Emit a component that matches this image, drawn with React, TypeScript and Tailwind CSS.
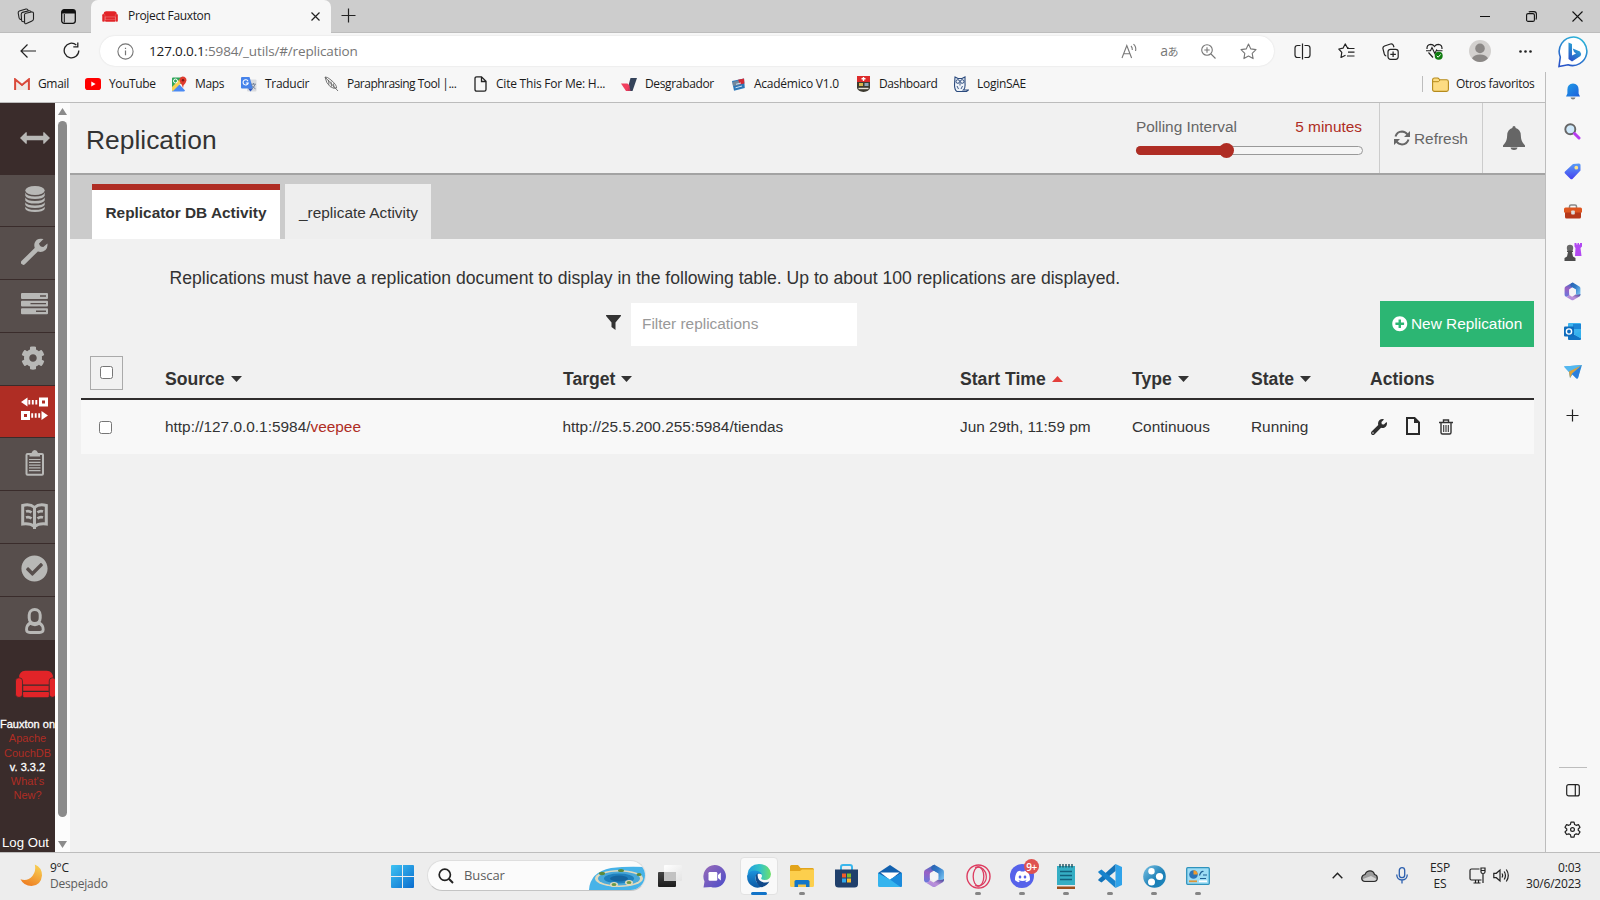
import React from "react";
import type { ReactNode } from "react";
import { SiDiscord } from "react-icons/si";
import { FaWrench, FaPlusCircle, FaCheckCircle, FaCog } from "react-icons/fa";

type IconProps = { w: number; h: number; vb?: string; children: ReactNode; className?: string };

function Svg({ w, h, vb, children, className }: IconProps) {
  return (
    <svg width={w} height={h} viewBox={vb ?? `0 0 ${w} ${h}`} fill="none" className={"block shrink-0 " + (className ?? "")}>
      {children}
    </svg>
  );
}

/* ---------- Shared drawings ---------- */

function Couch({ w, h, color = "#e22428", gap = "#3b2c2b" }: { w: number; h: number; color?: string; gap?: string }) {
  return (
    <Svg w={w} h={h} vb="0 0 40 27">
      <path d="M4 7 Q4 1 10 0.5 H31 Q37 1 37 7 V14 H4z" fill={color} />
      <path d="M4 7 Q8 8 8 14 V24 H33 V14 Q33 8 37 7" fill={color} />
      <path d="M7.5 14.6 H33 M7.5 20.8 H33" stroke={gap} strokeWidth="1.2" />
      <rect x="0.5" y="7.5" width="6.8" height="19" rx="3" fill={color} stroke={gap} strokeWidth=".8" />
      <rect x="33.4" y="7.5" width="6.4" height="19" rx="3" fill={color} stroke={gap} strokeWidth=".8" />
      <rect x="8" y="21.5" width="25" height="5" rx="1" fill={color} />
    </Svg>
  );
}

function M365({ s, id }: { s: number; id: string }) {
  return (
    <Svg w={s} h={s} vb="0 0 24 24">
      <defs>
        <linearGradient id={id + "a"} x1="0.500" y1="0" x2="0.300" y2="1">
          <stop offset="0" stopColor="#3f6fc4" />
          <stop offset=".45" stopColor="#9a5fc4" />
          <stop offset="1" stopColor="#6a78dc" />
        </linearGradient>
        <linearGradient id={id + "b"} x1="0" y1="0" x2="1" y2="0.800">
          <stop offset="0" stopColor="#2a5fae" />
          <stop offset=".45" stopColor="#2f78c6" />
          <stop offset="1" stopColor="#7ac4f2" />
        </linearGradient>
        <linearGradient id={id + "c"} x1="0" y1="1" x2="1" y2="0">
          <stop offset="0" stopColor="#a386e0" />
          <stop offset=".5" stopColor="#bb8fd8" />
          <stop offset="1" stopColor="#3c3f94" />
        </linearGradient>
      </defs>
      <path d="M13 .8 Q12 .6 11 1.200 L3.300 5.800 Q2 6.600 2 8.200 V16 Q2 17.600 3.300 18.300 Q5 19 6.500 18 Q8 17 8 15 V9 L13 6z" fill={`url(#${id}a)`} />
      <path d="M11 1.200 Q12.200.500 13.400 1.200 L20.700 5.600 Q22 6.500 22 8 V15.800 Q22 17.500 20.500 18.300 L16.300 15.500 V9.500 L9.500 5.500 Q8.500 3 11 1.200z" fill={`url(#${id}b)`} />
      <path d="M22 15 Q22.200 17.400 20.700 18.300 L13.400 22.700 Q12 23.500 10.600 22.700 L3.300 18.300 Q6 19.500 8 16.500 L11.500 18.600 L16 15.800 Q20 16.500 22 15z" fill={`url(#${id}c)`} />
      <path d="M12 7.200 L16.300 9.700 V14.500 L12 17 L7.800 14.500 V9.700z" fill="#f4f4f6" />
    </Svg>
  );
}

/* ---------- Title bar ---------- */

function TitleBar() {
  return (
    <div className="flex h-[33px] shrink-0 items-stretch border-b border-[#bdbdbd] bg-[#cdcdcd]">
      <div className="flex w-[91px] items-center gap-[26px] pl-[17px]">
        <Svg w={18} h={17}>
          <g stroke="#222" strokeWidth="1.100" strokeLinejoin="round">
            <path d="M7.500 6.800 Q7.600 5.600 8.800 5.300 L14.500 4 Q16.500 3.700 16.500 5.500 V11 Q16.400 12.500 15 13 L9.500 15.600 Q7.700 16.200 7.600 14.500z" />
            <path d="M7.400 13.600 L6.200 13.800 Q4.700 13.800 4.600 12.500 L4.200 6.500 Q4.200 4.800 5.500 4.400 L12 2.800 Q13.700 2.500 14.200 4" />
            <path d="M4.500 11.500 L3.500 11.400 Q2.300 11.300 2.100 10 L1.200 5 Q1.100 3.500 2.300 3 L9 1 Q10.800.7 11.300 2.800" />
          </g>
        </Svg>
        <Svg w={15} h={15}>
          <rect x=".7" y=".7" width="13.600" height="13.600" rx="2.500" stroke="#111" strokeWidth="1.300" />
          <path d="M.7 4.500 V3 Q.7.7 3 .7 H12 Q14.300.7 14.300 3 V4.500z" fill="#111" />
          <path d="M3.300 5 V13.500" stroke="#111" strokeWidth="1" />
        </Svg>
      </div>
      <div className="-mb-px flex w-[240px] items-center rounded-t-[7px] bg-[#f7f7f7] pb-px pl-[11px] pr-[11px]">
        <Couch w={16} h={11} gap="#f19a9a" />
        <span className="ml-[10px] flex-1 text-[12px] tracking-[-0.34px] text-[#1a1a1a]">Project Fauxton</span>
        <Svg w={9} h={9}>
          <path d="M.5.5 L8.500 8.500 M8.500.5 L.5 8.500" stroke="#222" strokeWidth="1.200" />
        </Svg>
      </div>
      <div className="flex flex-1 items-center pl-[10px]">
        <Svg w={15} h={15} className="-mt-px">
          <path d="M7.500.5 V14.500 M.5 7.500 H14.500" stroke="#222" strokeWidth="1.200" />
        </Svg>
      </div>
      <div className="flex items-center pr-[17px]">
        <Svg w={10} h={10}>
          <path d="M0 5.500 H10" stroke="#111" strokeWidth="1" />
        </Svg>
        <Svg w={11} h={11} className="ml-[36px]">
          <rect x=".6" y="2.600" width="7.800" height="7.800" rx="1.500" stroke="#111" strokeWidth="1.100" />
          <path d="M2.800 1 Q3.200.6 4.500.6 H8 Q10.400.6 10.400 3 V6.500 Q10.400 8 9.800 8.500" stroke="#111" strokeWidth="1.100" />
        </Svg>
        <Svg w={11} h={11} className="ml-[35px]">
          <path d="M.5.5 L10.500 10.500 M10.500.5 L.5 10.500" stroke="#111" strokeWidth="1.100" />
        </Svg>
      </div>
    </div>
  );
}

/* ---------- Toolbar ---------- */

function Cell({ w, children }: { w: string; children: ReactNode }) {
  return <div className={"flex shrink-0 items-center justify-center " + w}>{children}</div>;
}

const STAR = "M8.500 1 L10.800 5.900 L16 6.600 L12.200 10.300 L13.100 15.600 L8.500 13.100 L3.900 15.600 L4.800 10.300 L1 6.600 L6.200 5.900z";

function Toolbar() {
  return (
    <div className="flex h-[39px] shrink-0 items-center bg-[#f7f7f7] pb-[3px]">
      <div className="flex w-[100px] items-center pl-[20px]">
        <Svg w={16} h={14} className="-mt-px">
          <path d="M16 7 H1 M7.500.5 L1 7 L7.500 13.500" stroke="#222" strokeWidth="1.200" />
        </Svg>
        <Svg w={17} h={17} className="-mt-px ml-[27px]">
          <path d="M15.800 8.500 A7.300 7.300 0 1 1 13.300 3" stroke="#222" strokeWidth="1.300" />
          <path d="M14.800.4 V4.800 H10.300" stroke="#222" strokeWidth="1.300" />
        </Svg>
      </div>
      <div className="flex h-[30px] w-[1174px] items-center rounded-full bg-white shadow-[0_0_2px_rgba(0,0,0,0.12)]">
        <Svg w={17} h={17} className="ml-[17px]">
          <circle cx="8.500" cy="8.500" r="7.600" stroke="#757575" strokeWidth="1.100" />
          <path d="M8.500 7.500 V12.300 M8.500 4.700 V6" stroke="#757575" strokeWidth="1.200" />
        </Svg>
        <span className="ml-[15px] flex-1 text-[13.500px] tracking-[-0.15px] text-[#767676]">
          <span className="text-[#1a1a1a]">127.0.0.1</span>:5984/_utils/#/replication
        </span>
        <Cell w="w-[40px]">
          <Svg w={17} h={17}>
            <path d="M1 15 L5.800 2.500 L10.600 15 M2.700 10.800 H9" stroke="#777" strokeWidth="1.100" />
            <path d="M10 3 Q11.500 4.500 11.300 7 M12.500 1.200 Q15.500 4 14.600 8" stroke="#777" strokeWidth="1.100" />
          </Svg>
        </Cell>
        <Cell w="w-[40px]">
          <span className="-mt-px font-['Open_Sans','Noto_Sans_CJK_JP',sans-serif] text-[14px] leading-none tracking-[-0.6px] text-[#777]">
            a<span className="text-[11px]">あ</span>
          </span>
        </Cell>
        <Cell w="w-[40px]">
          <Svg w={15} h={15} className="-ml-px">
            <circle cx="6" cy="6" r="5.300" stroke="#777" strokeWidth="1.100" />
            <path d="M10 10 L14.500 14.500 M6 3.300 V8.700 M3.300 6 H8.700" stroke="#777" strokeWidth="1.100" />
          </Svg>
        </Cell>
        <Cell w="w-[40px]">
          <Svg w={17} h={17} className="-ml-px">
            <path d={STAR} stroke="#777" strokeWidth="1.100" strokeLinejoin="round" />
          </Svg>
        </Cell>
        <div className="w-[5px]" />
      </div>
      <div className="w-[6px]" />
      <Cell w="w-[44px]">
        <Svg w={17} h={17}>
          <path d="M6.500 2.500 H3.500 Q1 2.500 1 5 V12 Q1 14.500 3.500 14.500 H6.500 M10.500 2.500 H13.500 Q16 2.500 16 5 V12 Q16 14.500 13.500 14.500 H10.500 M8.500 .5 V16.500" stroke="#222" strokeWidth="1.200" />
        </Svg>
      </Cell>
      <Cell w="w-[44px]">
        <Svg w={17} h={17}>
          <path d="M10.500 4.500 L9.200 4.500 L7.200 .9 L5 5.200 L.8 6 L3.800 9.300 L3 14.500 L7.500 12.300" stroke="#222" strokeWidth="1.200" strokeLinejoin="round" />
          <path d="M9 5.500 H16.500 M10 9.200 H16.500 M9 13 H16.500" stroke="#222" strokeWidth="1.200" />
        </Svg>
      </Cell>
      <Cell w="w-[44px]">
        <Svg w={17} h={17}>
          <rect x="6" y="6.300" width="10.200" height="10" rx="2.500" stroke="#222" strokeWidth="1.200" />
          <path d="M11.100 8.500 V14 M8.300 11.300 H13.900" stroke="#222" strokeWidth="1.200" />
          <path d="M4.300 13 Q3 12.800 2.300 11 L1 5.800 Q.6 3.800 2.500 3 L8.500 1 Q10.500.4 11.300 2.200 L12 4.300" stroke="#222" strokeWidth="1.200" />
        </Svg>
      </Cell>
      <Cell w="w-[44px]">
        <Svg w={17} h={17}>
          <path d="M1 6 Q.6 1.400 4.800 1.300 Q7 1.300 8.500 3.500 Q10 1.300 12.200 1.300 Q16.300 1.400 16 6 M2.500 9.500 L7 14.500" stroke="#222" strokeWidth="1.200" />
          <path d="M0 7.800 H4.500 L6 4.500 L8.800 10.500 L10.600 7 L11.300 7.800 H16.500" stroke="#222" strokeWidth="1.100" />
          <circle cx="12.700" cy="12.800" r="4" fill="#107c10" />
          <path d="M10.800 12.900 L12.200 14.200 L14.700 11.400" stroke="#fff" strokeWidth="1" />
        </Svg>
      </Cell>
      <Cell w="w-[47px]">
        <Svg w={22} h={22}>
          <circle cx="11" cy="11" r="11" fill="#d3d1cf" />
          <circle cx="11" cy="8.400" r="4.800" fill="#8b8886" />
          <path d="M3 18.300 Q5 14.500 11 14.500 Q17 14.500 19 18.300 Q16 22 11 22 Q6 22 3 18.300z" fill="#8b8886" />
        </Svg>
      </Cell>
      <Cell w="w-[45px]">
        <Svg w={13} h={3}>
          <circle cx="1.500" cy="1.500" r="1.300" fill="#222" />
          <circle cx="6.500" cy="1.500" r="1.300" fill="#222" />
          <circle cx="11.500" cy="1.500" r="1.300" fill="#222" />
        </Svg>
      </Cell>
      <Cell w="w-[50px]">
        <Svg w={31} h={32} className="mt-px">
          <defs>
            <linearGradient id="bing" x1="0.800" y1="0" x2="0.300" y2="1">
              <stop offset="0" stopColor="#2db7d8" />
              <stop offset="1" stopColor="#2955c8" />
            </linearGradient>
          </defs>
          <path d="M15.800 1 A14.300 14.300 0 1 1 10 28.800 L1 30.500 L2.300 21 A14.500 14.500 0 0 1 15.800 1z" fill="#fff" stroke="url(#bing)" strokeWidth="1.600" />
          <path d="M10.500 6.500 L14 8 V19.500 L18 17.500 L16 16 L14.800 12.600 L22 15.500 Q23.800 17.500 22.500 20 L14 25.500 L10.500 23z" fill="url(#bing)" />
        </Svg>
      </Cell>
    </div>
  );
}

/* ---------- Bookmarks ---------- */

function Bookmark({ w, icon, label, track }: { w: string; icon: ReactNode; label: string; track?: string }) {
  return (
    <div className={"flex shrink-0 items-center " + w}>
      <div className="flex w-4 justify-center">{icon}</div>
      <span className={"ml-2 whitespace-nowrap text-[12px] text-[#1a1a1a] " + (track ?? "tracking-[-0.35px]")}>{label}</span>
    </div>
  );
}

function Bookmarks() {
  return (
    <div className="flex h-[31px] shrink-0 items-center border-b border-[#bcbcbc] bg-[#f7f7f7] pb-[6px] pl-[14px]">
      <Bookmark w="w-[71px]" label="Gmail" icon={
        <Svg w={16} h={12}>
          <path d="M1.200 12 V1.500 L8 7 L14.800 1.500 V12" stroke="#d9493a" strokeWidth="2.200" />
          <path d="M2.500 12 V4 L8 8.500 L13.500 4 V12z" fill="#eee9e6" />
        </Svg>} />
      <Bookmark w="w-[86px]" label="YouTube" track="tracking-[-0.4px]" icon={
        <Svg w={16} h={12}>
          <rect width="16" height="12" rx="2.800" fill="#f00" />
          <path d="M6.300 3.400 L10.600 6 L6.300 8.600z" fill="#fff" />
        </Svg>} />
      <Bookmark w="w-[70px]" label="Maps" icon={
        <Svg w={16} h={16}>
          <path d="M1 2.500 Q1 1.500 2 1.500 H12 V8 L8 8 L1 15z" fill="#2fa65a" />
          <path d="M1 15 L8 8 L14 14.500 Q13.700 15.500 12.700 15.500 H2 Q1 15.500 1 15z" fill="#4a8af4" />
          <path d="M1 11 L10 2 L12.500 4.500 L2 15 Q1 15 1 14z" fill="#f7d154" />
          <circle cx="4.500" cy="5" r="2" stroke="#fff" strokeWidth="1" />
          <path d="M11.500 .5 Q15.500.8 15.500 4.500 Q15 7 12.500 9.500 L12 12 Q11.500 9 9.500 7 Q8 5 8.500 3 Q9.500.6 11.500.5z" fill="#df3b2f" />
          <circle cx="12" cy="4.300" r="1.200" fill="#7c1b12" />
        </Svg>} />
      <Bookmark w="w-[82px]" label="Traducir" track="tracking-[-0.3px]" icon={
        <Svg w={16} h={16}>
          <rect x="6" y="3.500" width="9.500" height="12" rx="1" fill="#d9dbdf" />
          <path d="M1 1 Q0 1 0 2 V11.500 Q0 12.500 1 12.500 H12 L8.500 1z" fill="#4683ea" />
          <path d="M7 12.500 H12 L9.500 15.500z" fill="#2a56c0" />
          <path d="M7 5.200 A2.600 2.600 0 1 0 7.200 7 H4.800" stroke="#fff" strokeWidth="1.100" />
          <path d="M10 8.200 H15 M12.500 7 V8.200 M14 8.500 Q13 11.500 10.800 12.800 M11 9.500 Q12.500 12 14.500 12.800" stroke="#6d7d95" strokeWidth=".9" />
        </Svg>} />
      <Bookmark w="w-[149px]" label="Paraphrasing Tool |..." track="tracking-[-0.52px]" icon={
        <Svg w={15} h={16}>
          <path d="M1 1 Q3 .5 7 4 Q13 9 12.500 12 Q10 13.300 6 10.500 Q2 7 1 1z M1.500 1.500 L14 15 M4.500 4 L5 8.500 M7 5.500 L7.500 10.500 M9.500 7.500 L10 12" stroke="#555" strokeWidth=".8" />
        </Svg>} />
      <Bookmark w="w-[149px]" label="Cite This For Me: H..." track="tracking-[-0.22px]" icon={
        <Svg w={13} h={16}>
          <path d="M1 2.500 Q1 .8 2.700.8 H7.500 L12 5.300 V13.500 Q12 15.200 10.300 15.200 H2.700 Q1 15.200 1 13.500z M7.500 1 V5.500 H12" stroke="#222" strokeWidth="1.300" />
        </Svg>} />
      <Bookmark w="w-[109px]" label="Desgrabador" icon={
        <Svg w={16} h={13}>
          <path d="M9.500 0 H16 L11.500 13 H6z" fill="#34435a" />
          <path d="M0 5.500 H6.500 L8.500 8 L6.500 13 H5z" fill="#f2405f" />
          <path d="M5 13 L8 6 L9.500 13z" fill="#ee3a5c" opacity=".8" />
        </Svg>} />
      <Bookmark w="w-[125px]" label="Académico V1.0" track="tracking-[-0.25px]" icon={
        <Svg w={13} h={13}>
          <path d="M0 3 L12 .5 L12.800 10 L2 12.800z" fill="#2c77b8" />
          <path d="M6 1.700 L12 .5 L12.400 5.500 L7 6.500z" fill="#d22a35" />
          <path d="M.5 4 L6.500 2.500 L8 7 L1 8z" fill="#72879c" />
          <path d="M3.500 9.800 L10 8 M4 6.300 L9 5" stroke="#cfe2f2" strokeWidth="1" />
        </Svg>} />
      <Bookmark w="w-[98px]" label="Dashboard" track="tracking-[-0.4px]" icon={
        <Svg w={13} h={16}>
          <path d="M0 0 H13 V6 H0z" fill="#dd2b2b" />
          <path d="M0 6 H13 V12 Q12 15.500 6.500 16 Q1 15.500 0 12z" fill="#3d3a30" />
          <path d="M6.500 1 V5 M4.500 2.800 H8.500" stroke="#fff" strokeWidth="1.400" />
          <rect x="2" y="7" width="4" height="3" fill="#d7b64a" />
          <rect x="7.500" y="7" width="4" height="3" fill="#8fa4b5" />
          <path d="M1.500 12.500 H11.500" stroke="#e6e2d8" strokeWidth="1.400" />
        </Svg>} />
      <Bookmark w="w-[90px]" label="LoginSAE" track="tracking-[-0.28px]" icon={
        <Svg w={16} h={16}>
          <path d="M2 1 L5 2.500 H9 L12 1 V7 Q12.500 12.500 10.500 14 H15.500 L13.500 15.500 H4 Q1.500 14 1.500 9z" fill="#eef3f9" stroke="#2b4a7d" strokeWidth="1.100" />
          <circle cx="4.800" cy="5.500" r="1.800" stroke="#2b4a7d" />
          <circle cx="9.200" cy="5.500" r="1.800" stroke="#2b4a7d" />
          <path d="M7 7 V9.500 M4 10 L5.500 13 M9.500 10 L8 13" stroke="#2b4a7d" strokeWidth=".9" />
        </Svg>} />
      <div className="flex-1" />
      <div className="mr-[9px] h-4 w-px bg-[#bdbdbd]" />
      <Bookmark w="w-[113px]" label="Otros favoritos" icon={
        <Svg w={17} h={15}>
          <path d="M.6 3 Q.6 1 2.500 1 H6 L8 2.800 H14.500 Q16.400 2.800 16.400 4.700 V12.500 Q16.400 14.400 14.500 14.400 H2.500 Q.6 14.400.6 12.500z" fill="#fddc82" stroke="#b58a1c" strokeWidth="1.100" />
          <path d="M1 4.700 H6.500 L8 3" stroke="#b58a1c" strokeWidth="1" />
        </Svg>} />
    </div>
  );
}

/* ---------- Fauxton navigation ---------- */

const G = "#b8b8b6";

const NAV: { icon: ReactNode; active?: boolean }[] = [
  { icon: (
    <Svg w={20} h={26}>
      <ellipse cx="10" cy="4.500" rx="9.700" ry="4.500" fill={G} />
      <path d="M.3 6.500 Q1.500 10.500 10 10.500 Q18.500 10.500 19.700 6.500 V9.800 Q18 13 10 13 Q2 13 .3 9.800z M.3 11.500 Q2 15 10 15 Q18 15 19.700 11.500 V14.500 Q18 17.600 10 17.600 Q2 17.600.3 14.500z M.3 16.200 Q2 19.500 10 19.500 Q18 19.500 19.700 16.200 V19 Q18 22 10 22 Q2 22 .3 19z M.3 20.700 Q2 23.800 10 23.800 Q18 23.800 19.700 20.700 V23 Q18 26 10 26 Q2 26 .3 23z" fill={G} />
    </Svg>) },
  { icon: (
    <Svg w={27} h={27}>
      <path d="M2.300 24.500 L15 12" stroke={G} strokeWidth="4.600" strokeLinecap="round" />
      <path d="M22.500 1 Q15.500-.5 13.600 5 Q12.800 8 14 10.500 L17 13.500 Q21 14.800 24.500 12 Q27 9.500 26.400 5.500 L22.300 9 Q18.800 9 18 5.500z" fill={G} />
    </Svg>) },
  { icon: (
    <Svg w={27} h={22}>
      <path d="M1 0 H26 Q27 0 27 1 V5 Q27 6 26 6 H1 Q0 6 0 5 V1 Q0 0 1 0z M1 7.700 H26 Q27 7.700 27 8.700 V12.500 Q27 13.500 26 13.500 H1 Q0 13.500 0 12.500 V8.700 Q0 7.700 1 7.700z M1 15.300 H26 Q27 15.300 27 16.300 V20.300 Q27 21.300 26 21.300 H1 Q0 21.300 0 20.300 V16.300 Q0 15.300 1 15.300z" fill={G} />
      <path d="M19 3 H25 M9.500 10.600 H25 M15 18.300 H25" stroke="#574e4c" strokeWidth="1.400" />
    </Svg>) },
  { icon: <FaCog size={24} color={G} className="-ml-[3px] mt-px" /> },
  { active: true, icon: (
    <Svg w={27} h={24} className="-mt-px">
      <path d="M0 5 L6.500 .5 V9.500z M27 18.500 L20.500 14 V23z" fill="#fff" />
      <path d="M8.300 3 V7.500 M11.800 3 V7.500 M15.300 3 V7.500 M11.200 16.200 V20.800 M14.700 16.200 V20.800 M18.200 16.200 V20.800" stroke="#fff" strokeWidth="1.900" />
      <rect x="19.500" y="2" width="6" height="6" stroke="#fff" strokeWidth="3" />
      <rect x="1.500" y="15.500" width="6" height="6" stroke="#fff" strokeWidth="3" />
    </Svg>) },
  { icon: (
    <Svg w={20} h={26}>
      <rect x="1.500" y="4" width="16.500" height="20.700" rx="1" stroke={G} strokeWidth="2" />
      <path d="M4.500 6.500 V4 Q4.500 3 6.500 3 Q7.500 0 9.800 0 Q12 0 13 3 Q15 3 15 4 V6.500z" fill={G} />
      <path d="M4 9.500 H15.500 M4 12.300 H15.500 M4 15.100 H15.500 M4 17.900 H15.500 M4 20.700 H15.500" stroke={G} strokeWidth="1.200" />
    </Svg>) },
  { icon: (
    <Svg w={27} h={26}>
      <path d="M1.700 2.500 Q9 .5 13.500 4.500 Q18 .5 25.300 2.500 V21 Q18 20 13.500 23.500 Q9 20 1.700 21z" stroke={G} strokeWidth="3" />
      <path d="M13.500 4 V26" stroke={G} strokeWidth="3" />
      <path d="M5 8.500 Q8 7.500 10.500 9.500 M5 14.500 Q8 13.500 10.500 15.500 M22 8.500 Q19 7.500 16.500 9.500 M22 14.500 Q19 13.500 16.500 15.500" stroke={G} strokeWidth="2.800" />
    </Svg>) },
  { icon: <FaCheckCircle size={27} color={G} /> },
  { icon: (
    <Svg w={20} h={26}>
      <rect x="4.200" y="1.500" width="11" height="14" rx="5.500" stroke={G} strokeWidth="3" />
      <path d="M5 15 Q1.500 17.500 1.500 21.500 Q1.500 24.500 5 24.500 H14.500 Q18.200 24.500 18.200 21.500 Q18.200 17.500 14.500 15 Q12.500 16.800 10 16.800 Q7 16.800 5 15z" stroke={G} strokeWidth="2.800" />
    </Svg>) },
];

function NavBar() {
  return (
    <div className="flex h-full w-[55px] shrink-0 flex-col overflow-hidden bg-[#3a2c2b]">
      <div className="flex h-[72px] shrink-0 items-center pl-5">
        <Svg w={30} h={12} vb="0 0 31 12" className="-mt-[3px]">
          <path d="M0 6 L6 0 H7 V3.800 H24 V0 H25 L31 6 L25 12 H24 V8.200 H7 V12 H6z" fill={G} />
        </Svg>
      </div>
      <div className="flex h-[465px] shrink-0 flex-col overflow-hidden">
        {NAV.map((n, i) => (
          <div
            key={i}
            className={
              "flex shrink-0 items-center border-b border-[#3a2c2b] " +
              (n.active ? "bg-[#af2d24] " : "bg-[#574e4c] ") +
              (i === 0 ? "h-[52px]" : "h-[52.850px]")
            }
          >
            <div className="ml-[21px] flex w-[27px] shrink-0 justify-center pb-[3px]">{n.icon}</div>
          </div>
        ))}
      </div>
      <div className="mt-[30px] flex shrink-0 pl-[15px]">
        <Couch w={41} h={28} />
      </div>
      <div className="mt-[19px] flex shrink-0 flex-col items-center whitespace-nowrap text-[11px] leading-[14.300px] text-[#af2d24]">
        <span className="text-white [-webkit-text-stroke:0.3px_white]">Fauxton on</span>
        <span>Apache</span>
        <span>CouchDB</span>
        <span className="text-white [-webkit-text-stroke:0.3px_white]">v. 3.3.2</span>
        <span>What's</span>
        <span>New?</span>
      </div>
      <div className="mt-auto shrink-0 whitespace-nowrap pl-[2px] text-[13.200px] leading-[18px] text-white">Log Out</div>
    </div>
  );
}

function ScrollBar() {
  return (
    <div className="flex h-full w-[15px] shrink-0 flex-col items-center bg-[#fcfcfc]">
      <Svg w={9} h={7} className="mt-[5px]">
        <path d="M4.500 0 L9 7 H0z" fill="#8b8b8b" />
      </Svg>
      <div className="mt-[6px] h-[696px] w-[9px] rounded-full bg-[#8b8b8b]" />
      <Svg w={9} h={7} className="mb-[4px] mt-auto">
        <path d="M4.500 7 L0 0 H9z" fill="#8b8b8b" />
      </Svg>
    </div>
  );
}

/* ---------- Replication page ---------- */

function Header() {
  return (
    <div className="flex h-[72px] shrink-0 items-stretch border-b-[2px] border-[#a3a3a3] bg-[#f1f1f1]">
      <h1 className="flex flex-1 items-center pl-[16px] pt-[5px] text-[26.400px] text-[#333]">Replication</h1>
      <div className="flex w-[227px] flex-col pt-[14px]">
        <div className="flex justify-between text-[15.400px] leading-5 text-[#666]">
          <span>Polling Interval</span>
          <span className="pr-px text-[#af2d24]">5 minutes</span>
        </div>
        <div className="mt-[9px] flex h-[9px] items-center rounded-full border border-[#999] bg-[#f5f5f5]">
          <div className="-ml-px h-[9px] w-[89px] shrink-0 rounded-full bg-[#af2d24]" />
          <div className="-ml-[6px] h-[15px] w-[15px] shrink-0 rounded-full bg-[#af2d24]" />
        </div>
      </div>
      <div className="ml-4 flex w-[104px] items-center border-x border-[#ccc] pl-[14px] pt-px text-[15.400px] text-[#666]">
        <Svg w={16} h={16} className="-mt-px mr-[4px]">
          <path d="M1.500 6.500 Q3 1.700 8 1.600 Q11.500 1.700 13.500 4.500 M14.500 9.500 Q13 14.300 8 14.400 Q4.500 14.300 2.500 11.500" stroke="#666" strokeWidth="2" />
          <path d="M16 1 V7 H10z M0 15 V9 H6z" fill="#666" />
        </Svg>
        Refresh
      </div>
      <div className="flex w-[62px] items-center justify-center pr-px">
        <Svg w={22} h={24}>
          <path d="M11 0 Q12.500 0 12.700 2 Q17.500 3.500 17.800 9 Q18 14.500 20 17 L22 19.500 V21 H0 V19.500 L2 17 Q4 14.500 4.200 9 Q4.500 3.500 9.300 2 Q9.500 0 11 0z" fill="#666" />
          <path d="M7.500 21.500 H14.500 Q14 24 11 24 Q8 24 7.500 21.500z" fill="#666" />
        </Svg>
      </div>
    </div>
  );
}

function Tabs() {
  return (
    <div className="flex h-[64px] shrink-0 items-end gap-[5px] bg-[#cbcbcb] pl-[22px] text-[#333]">
      <div className="flex h-[55px] w-[188px] items-center justify-center border-t-[6px] border-[#af2d24] bg-white pb-[3px] text-[15.400px] font-bold">
        Replicator DB Activity
      </div>
      <div className="flex h-[55px] w-[146px] items-center justify-center bg-[#eee] pl-px pt-[3px] text-[15.400px]">_replicate Activity</div>
    </div>
  );
}

const GRID = "grid grid-cols-[84px_399px_396px_172px_119px_119px_1fr]";

function Head({ label, dir = "down" }: { label: string; dir?: "down" | "up" | "none" }) {
  return (
    <div className="flex items-center pt-[4px] text-[17.600px] font-bold">
      {label}
      {dir === "down" && (
        <Svg w={11} h={6} className="-mt-px ml-[6px]"><path d="M0 0 H11 L5.500 6z" fill="#333" /></Svg>
      )}
      {dir === "up" && (
        <Svg w={11} h={6} className="ml-[6px]"><path d="M0 6 H11 L5.500 0z" fill="#e33f3b" /></Svg>
      )}
    </div>
  );
}

function Box() {
  return <span className="block h-[13px] w-[13px] rounded-[2.500px] border border-[#767676] bg-white" />;
}

function Replications() {
  return (
    <div className="flex flex-1 flex-col bg-[#f1f1f1] pl-[11px] pr-[11px] text-[#333]">
      <p className="pl-[88.500px] pt-[27px] text-[17.600px] leading-6">
        Replications must have a replication document to display in the following table. Up to about 100 replications are displayed.
      </p>
      <div className="mt-[11px] flex h-[46px] items-center">
        <div className="flex flex-1 items-center pl-[525px]">
          <Svg w={15} h={15} className="-mt-1">
            <path d="M0 0 H15 Q15 1 14.500 1.500 L9.500 7.500 V15 L5.500 12 V7.500 L.5 1.500 Q0 1 0 0z" fill="#333" />
          </Svg>
          <div className="ml-[10px] flex h-[43px] w-[226px] items-center bg-white pl-[11px] text-[15.400px] text-[#999]">Filter replications</div>
        </div>
        <button className="flex h-[46px] w-[154px] items-center bg-[#2cb673] pl-[12px] text-[15.400px] text-white">
          <FaPlusCircle size={15.500} className="mr-[3.500px]" />
          New Replication
        </button>
      </div>
      <div className={GRID + " mt-[9px] h-[44px] border-b-[2px] border-[#2f2d2d]"}>
        <div className="pl-[9px]">
          <div className="flex h-[34px] w-[33px] items-center justify-center border border-[#aaa] pb-px">
            <Box />
          </div>
        </div>
        <Head label="Source" />
        <div className="-ml-px flex"><Head label="Target" /></div>
        <Head label="Start Time" dir="up" />
        <Head label="Type" />
        <Head label="State" />
        <Head label="Actions" dir="none" />
      </div>
      <div className={GRID + " h-[54px] items-center bg-[#f8f8f8] text-[15.400px]"}>
        <div className="pl-[18px] pt-px"><Box /></div>
        <div>http://127.0.0.1:5984/<span className="text-[#af2d24]">veepee</span></div>
        <div className="-ml-[1.500px]">http://25.5.200.255:5984/tiendas</div>
        <div>Jun 29th, 11:59 pm</div>
        <div>Continuous</div>
        <div>Running</div>
        <div className="flex items-center pl-px">
          <FaWrench size={16} color="#2f2f2f" />
          <Svg w={14} h={18} className="-mt-[2px] ml-[19px]">
            <path d="M1 1 H8.500 L13 5.500 V17 H1z" stroke="#2a2a2a" strokeWidth="2" />
            <path d="M8 0 V6 H14 L8.500 0z" fill="#2a2a2a" />
          </Svg>
          <Svg w={14} h={16} className="ml-[19px]">
            <path d="M0 3.500 H14 M4.500 3 V1 H9.500 V3 M2 4 V13.500 Q2 15 3.500 15 H10.500 Q12 15 12 13.500 V4" stroke="#333" strokeWidth="1.400" />
            <path d="M4.700 6 V13 M7 6 V13 M9.300 6 V13" stroke="#333" strokeWidth="1.100" />
          </Svg>
        </div>
      </div>
    </div>
  );
}

/* ---------- Edge side panel ---------- */

function SidePanel() {
  return (
    <div className="flex h-full w-[55px] shrink-0 flex-col items-center border-l border-[#bdbdbd] bg-[#f7f7f7] pr-px">
      <div className="flex h-[39.500px] w-full items-center justify-center">
        <Svg w={14} h={17}>
          <defs><linearGradient id="bell" x1="0" y1="0" x2="1" y2="1"><stop offset="0" stopColor="#1f9be6" /><stop offset="1" stopColor="#1d60dc" /></linearGradient></defs>
          <path d="M7 .5 Q12.500.8 12.600 6.500 V10.500 L14 13.500 H0 L1.400 10.500 V6.500 Q1.500.8 7 .5z" fill="url(#bell)" />
          <path d="M4.500 14.500 H9.500 Q9 16.500 7 16.500 Q5 16.500 4.500 14.500z" fill="#7c7c7c" />
        </Svg>
      </div>
      <div className="flex h-[40px] w-full items-center justify-center">
        <Svg w={17} h={17}>
          <circle cx="6.300" cy="6.300" r="5" fill="#cfe9fb" stroke="#666" strokeWidth="1.900" />
          <path d="M10.500 10.500 L15 15" stroke="#b63cf0" strokeWidth="3" strokeLinecap="round" />
        </Svg>
      </div>
      <div className="flex h-[40px] w-full items-center justify-center">
        <Svg w={17} h={17}>
          <defs><linearGradient id="tag" x1="0" y1="0" x2="0" y2="1"><stop offset="0" stopColor="#5a9df6" /><stop offset="1" stopColor="#4340f0" /></linearGradient></defs>
          <path d="M9 1 L15 .5 Q16.500.5 16.500 2 V7.500 L8.700 15.700 Q7.500 17 6.300 15.700 L1 10.500 Q0 9.500 1 8.500z" fill="url(#tag)" />
          <circle cx="12.300" cy="4.700" r="1.900" fill="#fbe38a" />
        </Svg>
      </div>
      <div className="flex h-[40px] w-full items-center justify-center">
        <Svg w={18} h={15}>
          <path d="M5.500 4 V2.500 Q5.500 1 7 1 H11 Q12.500 1 12.500 2.500 V4" stroke="#888" strokeWidth="1.500" />
          <rect x="1" y="7" width="16" height="7.500" rx="1.500" fill="#b5381a" />
          <path d="M1.500 3.500 H16.500 Q18 3.500 18 5 V8.500 H0 V5 Q0 3.500 1.500 3.500z" fill="#de5620" />
          <rect x="7.200" y="6.500" width="3.600" height="4" rx=".8" fill="#ddd" />
        </Svg>
      </div>
      <div className="flex h-[40px] w-full items-center justify-center">
        <Svg w={18} h={18}>
          <path d="M10.500 0 H12.500 V1.500 H13.500 V0 H15 V1.500 H16 V0 H18 V3.500 L16.500 5 L17.500 13 H11 L11.500 5 L10.500 3.500z" fill="#b249f2" />
          <circle cx="6" cy="5" r="3.200" fill="#686868" />
          <path d="M3 7.500 H9 V9 H8 L9 13.500 L11.500 15 V18 H.5 V15 L3 13.500 L4 9 H3z" fill="#4c4c4c" />
        </Svg>
      </div>
      <div className="flex h-[40px] w-full items-center justify-center"><M365 s={19} id="ms" /></div>
      <div className="flex h-[40px] w-full items-center justify-center">
        <Svg w={17} h={17}>
          <rect x="4" y="0" width="13" height="11" rx="1" fill="#3db4ef" />
          <path d="M9 1 H17 V6 H9z" fill="#1c86d6" />
          <path d="M4 8 L17 15 V16 Q17 17 16 17 H5 Q4 17 4 16z" fill="#1173c4" />
          <path d="M17 8 V15.500 L10 11.500z" fill="#33b1ee" />
          <rect x="0" y="3.500" width="10" height="10" rx="1" fill="#0f6cbd" />
          <circle cx="5" cy="8.500" r="2.600" stroke="#fff" strokeWidth="1.400" />
        </Svg>
      </div>
      <div className="flex h-[40px] w-full items-center justify-center">
        <Svg w={18} h={14}>
          <path d="M0 1.500 L18 0 L14 13 Q13 14 12 13 L8.500 9.500 L6 13 L5 7z" fill="#3a9ce0" />
          <path d="M0 1.500 L18 0 L5 7z" fill="#53b8f0" />
          <path d="M17.500.5 L5 6.500 L6 13 L8 8.500z" fill="#e0a33a" />
          <path d="M8 9 L17 1 L14 13 Q13 14 12 13z" fill="#2c7fdc" />
        </Svg>
      </div>
      <div className="mt-[4px] flex h-[40px] w-full items-center justify-center">
        <Svg w={13} h={13}>
          <path d="M6.500.5 V12.500 M.5 6.500 H12.500" stroke="#222" strokeWidth="1.200" />
        </Svg>
      </div>
      <div className="mt-auto h-px w-[28px] bg-[#bdbdbd]" />
      <div className="mt-[3px] flex h-[38px] w-full items-center justify-center">
        <Svg w={14} h={13}>
          <rect x=".7" y=".7" width="12.600" height="11.200" rx="2" stroke="#222" strokeWidth="1.200" />
          <path d="M9.300 1 V12" stroke="#222" strokeWidth="1.200" />
        </Svg>
      </div>
      <div className="mb-[3px] flex h-[40px] w-full items-center justify-center">
        <Svg w={17} h={17} vb="0 0 24 24">
          <path d="M9.800 1.500 h4.400 l.7 3.300 l2.300 1.300 l3.200-1 l2.200 3.800 l-2.500 2.300 v1.800 l2.500 2.300 l-2.200 3.800 l-3.200-1 l-2.300 1.300 l-.7 3.300 h-4.400 l-.7-3.300 l-2.300-1.300 l-3.200 1 l-2.200-3.800 l2.500-2.300 v-1.800 L1.400 8.900 l2.200-3.800 l3.200 1 l2.300-1.300z" stroke="#222" strokeWidth="1.700" strokeLinejoin="round" />
          <circle cx="12" cy="12" r="2.700" stroke="#222" strokeWidth="1.700" />
        </Svg>
      </div>
    </div>
  );
}

/* ---------- Windows taskbar ---------- */

function TaskItem({ children, open }: { children: ReactNode; open?: boolean }) {
  return (
    <div className="relative flex h-full w-[44px] shrink-0 items-center justify-center pb-px">
      {children}
      {open && <span className="absolute bottom-[5px] h-[3px] w-[6px] rounded-full bg-[#858585]" />}
    </div>
  );
}

function TaskBar() {
  return (
    <div className="flex h-[48px] shrink-0 items-center border-t border-[#bdbdbd] bg-[#ededed] text-[12px] text-[#222]">
      <div className="flex w-[380px] items-center pb-[2px] pl-[20px]">
        <Svg w={22} h={23} vb="0 0 23 23">
          <defs><linearGradient id="moon" x1="0.800" y1="0" x2="0.300" y2="1"><stop offset="0" stopColor="#f8d153" /><stop offset="1" stopColor="#ee7d22" /></linearGradient></defs>
          <path d="M15.500 0 Q23 3 23 11.500 Q22 22 12 22.500 Q4 22.500 .5 15.500 Q8 18 13 12 Q17 7 15.500 0z" fill="url(#moon)" />
        </Svg>
        <div className="ml-[8px] leading-[16px] tracking-[-0.3px]">
          <div>9°C</div>
          <div className="tracking-[-0.2px] text-[#5c5c5c]">Despejado</div>
        </div>
      </div>
      <div className="flex h-full w-[47px] items-center pb-px pl-[11px]">
        <Svg w={23} h={23}>
          <defs><linearGradient id="win" x1="0" y1="0" x2="1" y2="1"><stop offset="0" stopColor="#3ec3f3" /><stop offset="1" stopColor="#0a6cce" /></linearGradient></defs>
          <path d="M1 0 H11 V11 H0 V1 Q0 0 1 0z M12 0 H22 Q23 0 23 1 V11 H12z M0 12 H11 V23 H1 Q0 23 0 22z M12 12 H23 V22 Q23 23 22 23 H12z" fill="url(#win)" />
        </Svg>
      </div>
      <div className="mb-[2px] flex h-[31px] w-[219px] items-center overflow-hidden rounded-full border border-b-[#c4c4c4] border-[#dedede] bg-[#fbfbfb]">
        <Svg w={16} h={16} className="ml-[10px]">
          <circle cx="6.800" cy="6.800" r="5.600" stroke="#222" strokeWidth="1.700" />
          <path d="M10.800 10.800 L15 15" stroke="#222" strokeWidth="2" />
        </Svg>
        <span className="ml-[10px] flex-1 text-[13px] tracking-[-0.1px] text-[#5e5e5e]">Buscar</span>
        <Svg w={56} h={24} className="mt-[5px]">
          <path d="M0 24 Q1 6 22 2 Q38 0 56 1 V24z" fill="#47b3e8" />
          <ellipse cx="30" cy="12.500" rx="24" ry="8.500" fill="#e0d9bd" />
          <ellipse cx="30" cy="12.500" rx="21" ry="7" fill="#49a9da" />
          <ellipse cx="30" cy="12.500" rx="15" ry="5" fill="#1f80bd" />
          <ellipse cx="30" cy="12.500" rx="9" ry="3" fill="#15659f" />
          <ellipse cx="13" cy="7.500" rx="3" ry="1.700" fill="#5a8a3c" />
          <ellipse cx="32" cy="4.500" rx="3" ry="1.600" fill="#5a8a3c" />
          <ellipse cx="50" cy="8.500" rx="2.500" ry="1.600" fill="#5a8a3c" />
          <ellipse cx="40" cy="16.500" rx="4" ry="2.600" fill="#e0d9bd" />
          <ellipse cx="25" cy="18.500" rx="4" ry="2.600" fill="#e0d9bd" />
          <ellipse cx="40" cy="16.500" rx="2.400" ry="1.600" fill="#6a9a48" />
          <ellipse cx="25" cy="18.500" rx="2.400" ry="1.600" fill="#6a9a48" />
        </Svg>
      </div>
      <div className="ml-[2px] flex h-full items-center">
        <TaskItem>
          <Svg w={24} h={23}>
            <defs>
              <linearGradient id="tv" x1="0" y1="0" x2="0" y2="1"><stop offset="0" stopColor="#444" /><stop offset="1" stopColor="#1d1d1d" /></linearGradient>
              <linearGradient id="tw" x1="0" y1="0" x2="1" y2="1"><stop offset="0" stopColor="#fff" /><stop offset="1" stopColor="#e4e4e4" /></linearGradient>
            </defs>
            <rect x="6" y="0" width="18" height="16" rx="1" fill="url(#tw)" />
            <rect x="0" y="7" width="18" height="15" rx="1" fill="url(#tv)" />
            <path d="M6 7 H18 V16 H6z" fill="#c2c2c2" />
          </Svg>
        </TaskItem>
        <TaskItem>
          <Svg w={23} h={23}>
            <defs><linearGradient id="chat" x1="0" y1="0" x2="1" y2="1"><stop offset="0" stopColor="#9a6bb8" /><stop offset="1" stopColor="#4a4cc9" /></linearGradient></defs>
            <path d="M11.500 0 A11.300 11.300 0 1 1 8 22 L.5 22.500 L1.500 16.500 A11.500 11.500 0 0 1 11.500 0z" fill="url(#chat)" />
            <rect x="5.500" y="7" width="8.800" height="8.800" rx="1.300" fill="#fff" />
            <path d="M15 10 L17.800 7.500 V15.500 L15 13z" fill="#fff" />
          </Svg>
        </TaskItem>
        <div className="relative mb-px flex h-[38px] w-[44px] shrink-0 items-center justify-center">
          <div className="ml-px flex h-[38px] w-[38px] items-center justify-center rounded-[4px] border border-[#e2e2e2] bg-[#f9f9f9]">
            <Svg w={24} h={24}>
              <defs>
                <linearGradient id="e1" x1="0" y1="0.300" x2="1" y2="0.300"><stop offset="0" stopColor="#1f9de0" /><stop offset=".55" stopColor="#35c4c4" /><stop offset="1" stopColor="#6fe06a" /></linearGradient>
                <linearGradient id="e2" x1="0" y1="0" x2="0" y2="1"><stop offset="0" stopColor="#1c93dd" /><stop offset="1" stopColor="#0c59a4" /></linearGradient>
              </defs>
              <path d="M.5 10 Q2 .3 12 0 Q23 .5 24 10 Q23.500 16 17.500 16 Q13.500 16 14.300 13.800 Q16 11.500 13.500 9.300 Q7 5.500 .5 10z" fill="url(#e1)" />
              <path d="M0 12 Q1.500 6.500 8 6.500 Q13.500 7 15 10.500 Q10 8 8.500 13 Q8 20 15.500 22.500 Q11.500 24.500 7 23 Q0 20 0 12z" fill="url(#e2)" />
              <path d="M8.500 13 Q8.500 10.500 10.800 9 Q9.500 17 17 18.500 Q20.500 18.800 22.300 17.500 Q20 22 14.500 23.200 Q8.500 20.500 8.500 13z" fill="#114a8b" />
            </Svg>
          </div>
          <span className="absolute bottom-0 ml-px h-[3px] w-4 rounded-full bg-[#1173c8]" />
        </div>
        <TaskItem open>
          <Svg w={24} h={22}>
            <path d="M0 1.500 Q0 0 1.500 0 H8 L10.500 3 H22.500 Q24 3 24 4.500 V10 H0z" fill="#e2a41b" />
            <path d="M0 6 H10 L12 4.500 H24 V20.500 Q24 22 22.500 22 H1.500 Q0 22 0 20.500z" fill="#fccf4d" />
            <path d="M4.500 22 V16.500 Q4.500 15 6 15 H18 Q19.500 15 19.500 16.500 V22z" fill="#1376c8" />
            <path d="M8 22 V19.500 H16 V22z" fill="#f2c44a" />
          </Svg>
        </TaskItem>
        <TaskItem>
          <Svg w={23} h={24}>
            <path d="M6 6 V3 Q6 1 8 1 H15 Q17 1 17 3 V6" stroke="#3ab6ec" strokeWidth="2" />
            <path d="M0 5.500 H23 V20 Q23 23.500 19.500 23.500 H3.500 Q0 23.500 0 20z" fill="#1f3f6b" />
            <path d="M7 9.500 H11 V13.500 H7z" fill="#f15c2b" />
            <path d="M12 9.500 H16 V13.500 H12z" fill="#80bb2b" />
            <path d="M7 14.500 H11 V18.500 H7z" fill="#2fa8ea" />
            <path d="M12 14.500 H16 V18.500 H12z" fill="#fcb92c" />
          </Svg>
        </TaskItem>
        <TaskItem>
          <Svg w={24} h={22}>
            <path d="M0 8 L12 0 L24 8 V14 H0z" fill="#1260ae" />
            <path d="M2.500 7.500 H21.500 L12 15z" fill="#fff" />
            <path d="M0 8 L12 14.500 L24 8 V20.500 Q24 22 22.500 22 H1.500 Q0 22 0 20.500z" fill="#35b4ee" />
            <path d="M24 8 V20.500 Q24 22 22.500 22 L12 14.500z" fill="#1b8bdc" />
          </Svg>
        </TaskItem>
        <TaskItem><M365 s={24} id="mt" /></TaskItem>
        <TaskItem open>
          <Svg w={25} h={25}>
            <circle cx="12.500" cy="12.500" r="11.500" stroke="#dd3c60" strokeWidth="1.400" />
            <ellipse cx="12.500" cy="12.500" rx="5.300" ry="9.500" stroke="#dd3c60" strokeWidth="1.300" />
            <path d="M9 3.500 Q13 1.500 17 5 Q20.500 8.500 20.300 12.500 Q20.500 17 17 20 Q13 23.500 9 21.500" stroke="#dd3c60" strokeWidth="1.200" />
          </Svg>
        </TaskItem>
        <TaskItem open>
          <div className="relative flex h-6 w-6 items-center justify-center rounded-full bg-[#5662ea]">
            <SiDiscord size={15} color="#fff" />
            <span className="absolute -right-[5px] -top-[5px] flex h-[15px] w-[15px] items-center justify-center rounded-full bg-[#df5350] text-[10px] font-semibold leading-none tracking-[-0.5px] text-white">9+</span>
          </div>
        </TaskItem>
        <TaskItem open>
          <Svg w={18} h={25}>
            <path d="M0 2 H18 V21 H0z" fill="#35aec4" />
            <path d="M0 22 H18 V25 H0z" fill="#9c4f1c" />
            <path d="M0 21 H18 V22.500 H0z" fill="#e9e9e9" />
            <path d="M3 7.500 H15 M3 11.500 H15 M3 15.500 H15" stroke="#12607c" strokeWidth="1.500" />
            <path d="M3 0 V3.500 M6 0 V3.500 M9 0 V3.500 M12 0 V3.500 M15 0 V3.500" stroke="#1d4f5d" strokeWidth="1.400" />
          </Svg>
        </TaskItem>
        <TaskItem open>
          <Svg w={24} h={24}>
            <path d="M17.500 0 L24 3 V21 L17.500 24z" fill="#2fa3ea" />
            <path d="M17.500 0 V7 L3.500 18.500 L.3 16.500 L.3 15.500z" fill="#1372b8" />
            <path d="M17.500 24 V17 L3.500 5.500 L.3 7.500 L.3 8.500z" fill="#1883cc" />
          </Svg>
        </TaskItem>
        <TaskItem open>
          <Svg w={23} h={23}>
            <defs><linearGradient id="balls" x1="0" y1="0" x2="1" y2="1"><stop offset="0" stopColor="#7cc3e4" /><stop offset=".6" stopColor="#1b7fb6" /><stop offset="1" stopColor="#1d86bd" /></linearGradient></defs>
            <circle cx="11.500" cy="11.500" r="11.300" fill="url(#balls)" />
            <circle cx="8.500" cy="6.300" r="3.200" fill="#fff" />
            <circle cx="16.500" cy="11.500" r="3.600" fill="#fff" />
            <circle cx="8.500" cy="17" r="3.500" fill="#fff" />
          </Svg>
        </TaskItem>
        <TaskItem open>
          <Svg w={24} h={18}>
            <rect x=".7" y=".7" width="22.600" height="16.600" rx="1" fill="#9ddcf5" stroke="#2f93bd" strokeWidth="1.300" />
            <circle cx="7.500" cy="7.500" r="4.300" fill="#2b74b8" />
            <path d="M7.500 7.500 V3.200 A4.300 4.300 0 0 1 11.800 7.500z" fill="#f19a2c" />
            <path d="M13.500 8.500 Q15 4 17.500 4.500 M14 11.500 H20 M17 8 H21" stroke="#1f5f94" strokeWidth="1.200" />
            <path d="M3 14.300 H11" stroke="#dd9537" strokeWidth="1.800" />
            <path d="M13 14.300 H21" stroke="#fff" strokeWidth="1.800" />
          </Svg>
        </TaskItem>
      </div>
      <div className="flex-1" />
      <div className="flex h-full items-center pb-[2px]">
        <Svg w={11} h={7}>
          <path d="M.7 6.300 L5.500 1.200 L10.300 6.300" stroke="#222" strokeWidth="1.400" />
        </Svg>
        <Svg w={17} h={12} className="ml-[18px]">
          <path d="M4 11.300 Q.7 11.300.7 8 Q1 5 4 4.500 Q5.500.8 9 .8 Q12.500.8 13.500 4.500 Q16.300 5 16.300 8 Q16.300 11.300 13 11.300z" fill="#9d9d9d" stroke="#2b2b2b" strokeWidth="1.200" />
          <path d="M2 9 L10 6 L15.500 9 Q15 10.700 13 10.700 H4 Q2 10.700 2 9z" fill="#d4d4d4" />
        </Svg>
        <Svg w={12} h={17} className="ml-[18px]">
          <rect x="3.300" y=".7" width="5.400" height="10" rx="2.700" stroke="#2b5fae" strokeWidth="1.300" />
          <path d="M.7 7.500 Q1 13 6 13 Q11 13 11.300 7.500 M6 13 V16.500" stroke="#2b5fae" strokeWidth="1.300" />
        </Svg>
        <div className="ml-[12px] w-[40px] text-center text-[12px] leading-[16px] tracking-[-0.2px]">
          <div>ESP</div>
          <div>ES</div>
        </div>
        <Svg w={17} h={17} className="ml-[9px]">
          <path d="M10.500 2 H2.500 Q1 2 1 3.500 V11.500 Q1 13 2.500 13 H12.500 M4.500 16 H11.500 M6.500 13.500 V16 M9.500 13.500 V16" stroke="#222" strokeWidth="1.200" />
          <path d="M12 1 H16 V5 Q16 6.500 14 6.500 Q12 6.500 12 5z M14 6.500 V16 M12.300 3.500 H15.700" stroke="#222" strokeWidth="1.200" />
        </Svg>
        <Svg w={17} h={15} className="ml-[7px]">
          <path d="M.8 5.300 H3.300 L7 2 V13 L3.300 9.700 H.8z" stroke="#222" strokeWidth="1.200" />
          <path d="M9 5.500 Q10.300 7.500 9 9.500 M11.200 3.500 Q13.700 7.500 11.200 11.500 M13.300 1.500 Q17.300 7.500 13.300 13.500" stroke="#222" strokeWidth="1.200" />
        </Svg>
        <div className="w-[71px] text-right text-[12px] leading-[16px] tracking-[-0.2px]">
          <div>0:03</div>
          <div>30/6/2023</div>
        </div>
        <div className="w-[19px]" />
      </div>
    </div>
  );
}

export default function App() {
  return (
    <div className="flex h-[900px] w-[1600px] flex-col overflow-hidden bg-[#f7f7f7] font-['Open_Sans',sans-serif]">
      <TitleBar />
      <Toolbar />
      <div className="flex min-h-0 flex-1">
        <div className="flex w-[1545px] shrink-0 flex-col">
          <Bookmarks />
          <div className="flex min-h-0 flex-1 font-['Liberation_Sans',sans-serif]">
            <NavBar />
            <ScrollBar />
            <div className="flex flex-1 flex-col">
              <Header />
              <Tabs />
              <Replications />
            </div>
          </div>
        </div>
        <SidePanel />
      </div>
      <TaskBar />
    </div>
  );
}
